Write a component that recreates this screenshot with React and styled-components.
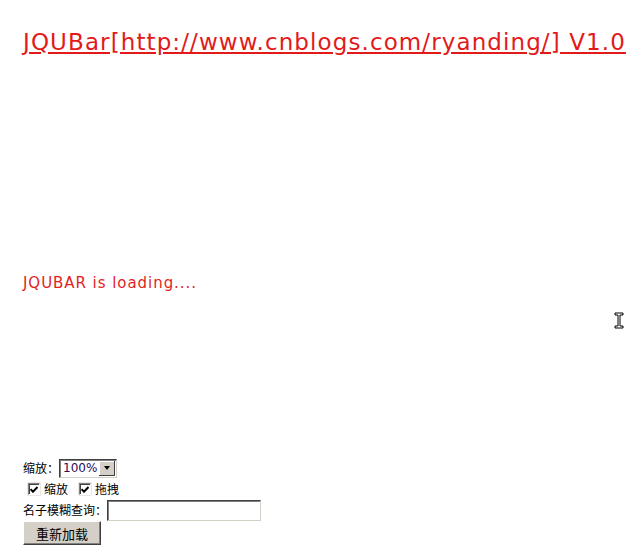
import styled, { createGlobalStyle } from "styled-components";

const GlobalStyle = createGlobalStyle`
  body {
    margin: 0;
    background: #fff;
    font-family: "DejaVu Sans", Tahoma, sans-serif;
  }
`;

const Page = styled.div`
  position: relative;
  width: 640px;
  height: 556px;
  padding: 29px 0 0 23px;
  box-sizing: border-box;
  overflow: hidden;
`;

const Title = styled.a`
  display: inline-block;
  color: #e21a1a;
  font-size: 23px;
  letter-spacing: 1.1px;
  line-height: 26px;
  text-decoration: underline;
  white-space: nowrap;
`;

const Loading = styled.div`
  margin-top: 219px;
  color: #e2231f;
  font-size: 15px;
  letter-spacing: 0.95px;
  line-height: 18px;
`;

const Controls = styled.div`
  margin-top: 165px;
  display: flex;
  flex-direction: column;
  font-size: 12px;
  color: #000;
  font-family: "Noto Sans CJK SC", "DejaVu Sans", sans-serif;
`;

const Row = styled.div`
  display: flex;
  align-items: center;
  height: ${(p) => p.$h || 20}px;
  padding-left: ${(p) => p.$indent || 0}px;
`;

const Label = styled.span`
  line-height: 14px;
`;

const SelectBox = styled.div`
  display: flex;
  align-items: stretch;
  width: 58px;
  height: 19px;
  box-sizing: border-box;
  border: 1px solid;
  border-color: #404040 #d4d0c8 #d4d0c8 #404040;
  box-shadow: inset 1px 1px 0 #808080;
  background: #fff;
`;

const SelectValue = styled.span`
  flex: 1;
  padding-left: 3px;
  font-family: "DejaVu Sans", Tahoma, sans-serif;
  font-size: 12px;
  line-height: 16px;
  color: #2a0a5a;
`;

const SelectArrow = styled.span`
  width: 15px;
  margin: 1px 1px 1px 0;
  background: #d4d0c8;
  border-right: 1px solid #404040;
  border-bottom: 1px solid #404040;
  box-shadow: inset 1px 1px 0 #fff;
  display: flex;
  align-items: center;
  justify-content: center;
  &::after {
    content: "";
    border-left: 3px solid transparent;
    border-right: 3px solid transparent;
    border-top: 4px solid #000;
  }
`;

const Check = styled.span`
  width: 12px;
  height: 12px;
  box-sizing: border-box;
  border: 1px solid;
  border-color: #808080 #fff #fff #808080;
  box-shadow: inset 1px 1px 0 #404040, 0 0 0 0.5px #d4d0c8;
  background: #fff;
  display: inline-flex;
  align-items: center;
  justify-content: center;
  margin-right: 4px;
  margin-left: ${(p) => p.$gap || 0}px;
`;

const TextInput = styled.div`
  width: 154px;
  height: 21px;
  box-sizing: border-box;
  border: 1px solid;
  border-color: #404040 #d4d0c8 #d4d0c8 #404040;
  box-shadow: inset 1px 1px 0 #808080;
  background: #fff;
`;

const Button = styled.button`
  width: 78px;
  height: 24px;
  padding: 0;
  background: #d4d0c8;
  border: 1px solid;
  border-color: #fff #404040 #404040 #fff;
  box-shadow: inset -1px -1px 0 #808080;
  font-family: "Noto Sans CJK SC", sans-serif;
  font-size: 13px;
  color: #000;
`;

const Cursor = styled.svg`
  position: absolute;
  left: 614px;
  top: 312px;
`;

const Tick = () => (
  <svg width="8" height="7" viewBox="0 0 8 7">
    <path d="M0.5 3.2 L3 5.7 L7.5 1" stroke="#000" strokeWidth="2" fill="none" />
  </svg>
);

export default function App() {
  return (
    <Page>
      <GlobalStyle />
      <Title href="#">JQUBar[http://www.cnblogs.com/ryanding/] V1.0</Title>
      <Loading>JQUBAR is loading....</Loading>
      <Controls>
        <Row $h={22}>
          <Label>缩放：</Label>
          <SelectBox>
            <SelectValue>100%</SelectValue>
            <SelectArrow />
          </SelectBox>
        </Row>
        <Row $h={20} $indent={5}>
          <Check>
            <Tick />
          </Check>
          <Label>缩放</Label>
          <Check $gap={11}>
            <Tick />
          </Check>
          <Label>拖拽</Label>
        </Row>
        <Row $h={22}>
          <Label>名子模糊查询：</Label>
          <TextInput />
        </Row>
        <Row $h={24}>
          <Button>重新加载</Button>
        </Row>
      </Controls>
      <Cursor width="10" height="17" viewBox="0 0 10 17">
        <path
          d="M1 1 H9 V3 H6 V14 H9 V16 H1 V14 H4 V3 H1 Z"
          fill="#fff"
          stroke="#000"
          strokeWidth="1"
        />
      </Cursor>
    </Page>
  );
}
